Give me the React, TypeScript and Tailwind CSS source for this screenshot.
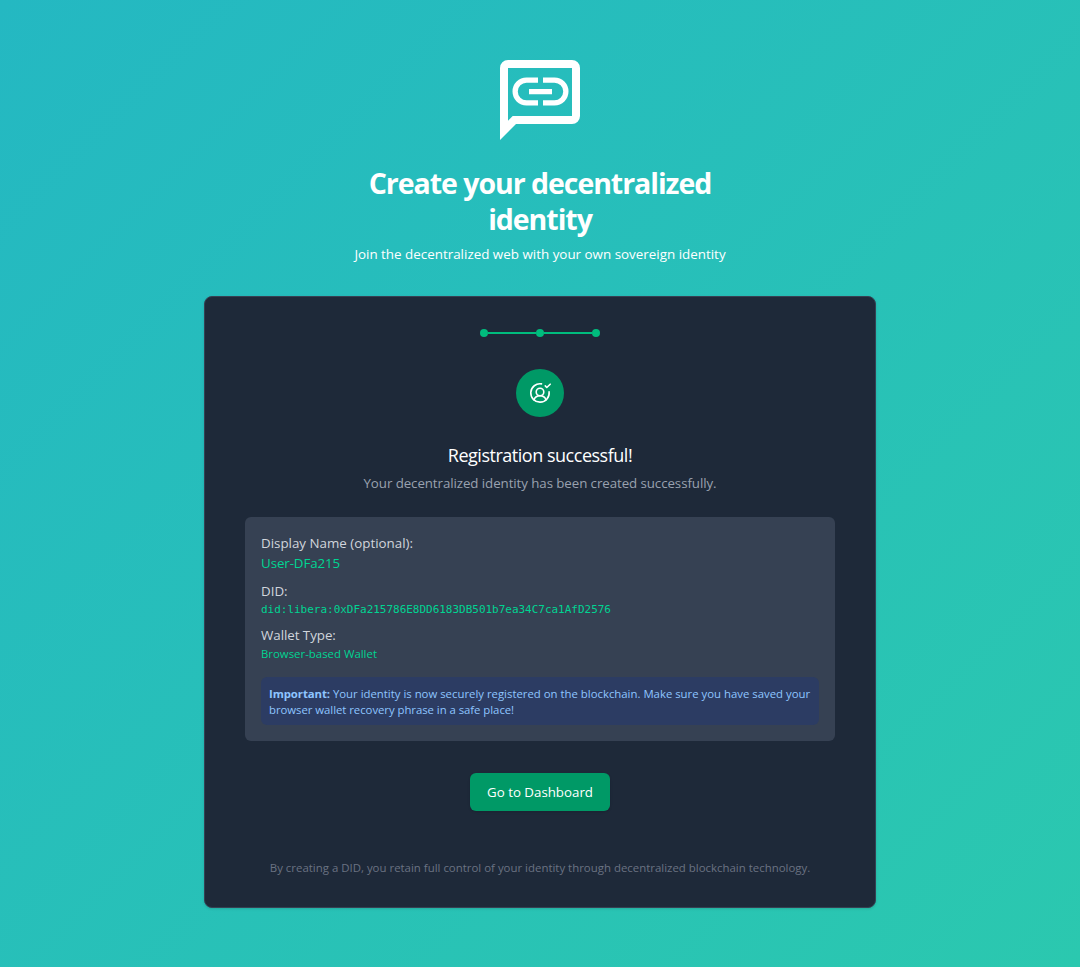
import React from "react";

function ChatLinkLogo() {
  return (
    <svg viewBox="0 0 80 80" className="h-20 w-20 shrink-0" fill="#fff">
      <path
        fillRule="evenodd"
        d="M8 0H72a8 8 0 0 1 8 8V56a8 8 0 0 1-8 8H16L0 80V8A8 8 0 0 1 8 0ZM8 8V60.7L12.7 56H72V8Z"
      />
      <path d="M38 17.5v5.3H26.5a8.7 8.7 0 0 0 0 17.4H38v5.3H26.5a14 14 0 0 1 0-28ZM43 17.5H54.5a14 14 0 0 1 0 28H43v-5.3H54.5a8.7 8.7 0 0 0 0-17.4H43ZM29 29H52v5.2H29Z" />
    </svg>
  );
}

function UserCheckIcon() {
  return (
    <svg
      viewBox="0 0 24 24"
      className="h-6 w-6"
      fill="none"
      stroke="#fff"
      strokeWidth="1.6"
      strokeLinecap="round"
      strokeLinejoin="round"
    >
      <path d="M13.5 2.9A9.2 9.2 0 1 0 21.1 10.8" />
      <circle cx="12" cy="11" r="3.8" />
      <path d="M5.9 18.8C7 16.1 9.3 14.8 12 14.8s5 1.3 6.1 4" />
      <path d="m17.3 4.9 1.5 1.6 3.4-3.3" />
    </svg>
  );
}

function Steps() {
  return (
    <div className="flex h-2 items-center">
      <div className="h-2 w-2 rounded-full bg-[#00bc7d]" />
      <div className="h-0.5 w-12 bg-[#00bc7d]" />
      <div className="h-2 w-2 rounded-full bg-[#00bc7d]" />
      <div className="h-0.5 w-12 bg-[#00bc7d]" />
      <div className="h-2 w-2 rounded-full bg-[#00bc7d]" />
    </div>
  );
}

export default function App() {
  return (
    <div className="flex min-h-screen flex-col items-center bg-[linear-gradient(135deg,#24b8c2_0%,#2bc8af_100%)] pt-[60px] font-['Open_Sans','Noto_Sans',sans-serif]">
      <ChatLinkLogo />
      <h2 className="mt-[25px] w-[448px] px-8 text-center text-[28.5px] leading-9 font-bold tracking-[-1.04px] text-white">
        Create your decentralized identity
      </h2>
      <p className="mt-[7px] text-[13.4px] leading-5 whitespace-nowrap text-white">
        Join the decentralized web with your own sovereign identity
      </p>
      <div className="mt-8 flex h-[612px] w-[672px] flex-col items-center rounded-lg border border-[#364153] bg-[#1e2939] px-10 pt-8 shadow-sm">
        <Steps />
        <div className="mt-8 flex h-12 w-12 shrink-0 items-center justify-center rounded-full bg-[#009966]">
          <UserCheckIcon />
        </div>
        <h3 className="mt-6 text-lg leading-7 tracking-[-0.48px] whitespace-nowrap text-white">
          Registration successful!
        </h3>
        <p className="mt-1 text-[13.3px] leading-5 tracking-[-0.07px] whitespace-nowrap text-[#99a1af]">
          Your decentralized identity has been created successfully.
        </p>
        <div className="mt-6 h-56 w-full shrink-0 rounded-md bg-[#364153] p-4 text-[13.35px] leading-5">
          <p className="text-[#d1d5dc]">Display Name (optional):</p>
          <p className="tracking-[-0.1px] text-[#00d492]">User-DFa215</p>
          <p className="mt-2 text-[#d1d5dc]">DID:</p>
          <p className="-mb-0.5 font-['DejaVu_Sans_Mono',monospace] text-[11px] leading-[18px] tracking-[-0.02px] text-[#00d492]">
            did:libera:0xDFa215786E8DD6183DB501b7ea34C7ca1AfD2576
          </p>
          <p className="mt-2 tracking-[-0.05px] text-[#d1d5dc]">Wallet Type:</p>
          <p className="-mb-0.5 text-[11.4px] leading-[18px] text-[#00d492]">Browser-based Wallet</p>
          <div className="mt-4 rounded-md bg-[#2c3c63] px-2 pt-[9px] pb-[7px] text-[11.37px] leading-4 whitespace-nowrap text-[#8ec5ff]">
            <p>
              <strong className="font-bold tracking-[-0.08px]">Important:</strong>{" "}
              <span>Your identity is now securely registered on the blockchain. Make sure you have saved your</span>
            </p>
            <p className="tracking-[-0.04px]">browser wallet recovery phrase in a safe place!</p>
          </div>
        </div>
        <button className="mt-8 h-[38px] w-[140px] shrink-0 rounded-md bg-[#009966] text-[13.3px] leading-5 whitespace-nowrap text-white shadow-sm">
          Go to Dashboard
        </button>
        <p className="mt-[49px] text-[11.43px] leading-4 whitespace-nowrap text-[#6a7282]">
          By creating a DID, you retain full control of your identity through decentralized blockchain technology.
        </p>
      </div>
    </div>
  );
}
